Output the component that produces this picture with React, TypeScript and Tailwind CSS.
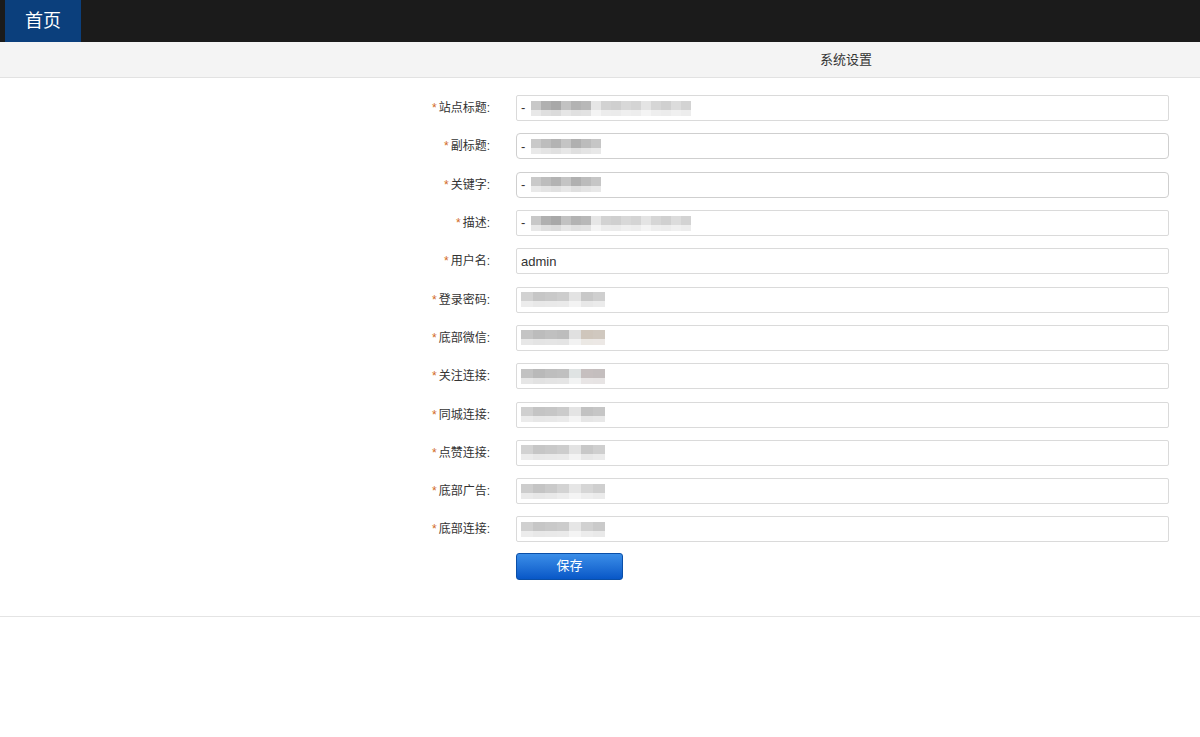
import React from "react";

type Row = {
  label: string;
  dash?: boolean;
  value?: string;
  blur?: string[];
  wide?: boolean;
  rounded?: boolean;
};

const shortBlur = ["#c9c9c9", "#bdbdbd", "#b3b3b3", "#c4c4c4", "#b0b0b0", "#bcbcbc", "#c6c6c6"];
const longBlur = [
  "#c8c8c8", "#b0b0b0", "#a8a8a8", "#c2c2c2", "#b3b3b3", "#b8b8b8", "#e6e6e6", "#d2d2d2",
  "#cfcfcf", "#d8d8d8", "#d4d4d4", "#e4e4e4", "#d6d6d6", "#d0d0d0", "#dcdcdc", "#d3d3d3",
];
const linkBlur = ["#d2d2d2", "#c6c6c6", "#c9c9c9", "#cdcdcd", "#e3e3e3", "#c8c8c8", "#cfcfcf"];

const rows: Row[] = [
  { label: "站点标题", dash: true, blur: longBlur },
  { label: "副标题", dash: true, blur: shortBlur, rounded: true },
  { label: "关键字", dash: true, blur: shortBlur, rounded: true },
  { label: "描述", dash: true, blur: longBlur },
  { label: "用户名", value: "admin" },
  { label: "登录密码", blur: linkBlur, wide: true },
  { label: "底部微信", wide: true, blur: ["#c4c4c4", "#bcbcbc", "#c0c0c0", "#bdbdbd", "#e0e0e0", "#cfc6bc", "#d0c8bf"] },
  { label: "关注连接", wide: true, blur: ["#c2c2c2", "#b9b9b9", "#bebebe", "#c0c0c0", "#dfe3e3", "#c6bfbf", "#c4bebe"] },
  { label: "同城连接", wide: true, blur: ["#cfcfcf", "#c4c4c4", "#c6c6c6", "#cbcbcb", "#e4e4e4", "#c2c2c2", "#c6c6c6"] },
  { label: "点赞连接", blur: linkBlur, wide: true },
  { label: "底部广告", wide: true, blur: ["#cdcdcd", "#c4c4c4", "#cacaca", "#d3d3d3", "#e6e6e6", "#d6d6d6", "#cfcfcf"] },
  { label: "底部连接", wide: true, blur: ["#d0d0d0", "#c6c6c6", "#c9c9c9", "#cccccc", "#e6e6e6", "#d1d1d1", "#cacaca"] },
];

const Blur = ({ shades, wide }: { shades: string[]; wide?: boolean }) => (
  <div className="flex flex-col">
    <div className="flex">
      {shades.map((c, i) => (
        <span
          key={i}
          className={wide ? "w-[12px] h-[9px]" : "w-[10px] h-[9px]"}
          style={{ backgroundColor: c }}
        />
      ))}
    </div>
    <div className="flex opacity-40">
      {shades.map((c, i) => (
        <span
          key={i}
          className={wide ? "w-[12px] h-[6px]" : "w-[10px] h-[6px]"}
          style={{ backgroundColor: c }}
        />
      ))}
    </div>
  </div>
);

export default function App() {
  return (
    <div
      className="min-h-screen bg-white text-[#333]"
      style={{ fontFamily: '"Liberation Sans", "Noto Sans CJK SC", sans-serif' }}
    >
      {/* Top bar */}
      <div className="h-[42px] bg-[#1b1b1b] flex">
        <div className="ml-[5px] w-[76px] bg-[#0b3f7c] text-white text-[18px] flex items-center justify-center">
          首页
        </div>
      </div>

      {/* Title bar */}
      <div className="h-[36px] bg-[#f4f4f4] border-b border-[#e2e2e2] grid grid-cols-[492px_1fr] items-center">
        <div />
        <div className="text-center text-[13px] text-[#333]">系统设置</div>
      </div>

      {/* Form */}
      <div className="pt-[11px] pb-[36px] border-b border-[#e4e4e4]">
        {rows.map((r) => (
          <div key={r.label} className="h-[38.3px] grid grid-cols-[492px_1fr] items-center">
            <div className="text-right text-[12px] text-[#333] pr-[2px]">
              <span className="text-[#d2691e] mr-[2px]">*</span>
              {r.label}:
            </div>
            <div className="pl-[24px] pr-[31px]">
              <div
                className={`h-[26px] border bg-white flex items-center pl-[4px] text-[13px] ${
                  r.rounded ? "rounded-[4px] border-[#cfcfcf]" : "rounded-[2px] border-[#dadada]"
                }`}
              >
                {r.value && <span className="text-[#333]">{r.value}</span>}
                {r.dash && <span className="text-[#333] mr-[6px]">-</span>}
                {r.blur && <Blur shades={r.blur} wide={r.wide} />}
              </div>
            </div>
          </div>
        ))}

        <div className="grid grid-cols-[492px_1fr] mt-[4px]">
          <div />
          <div className="pl-[24px]">
            <button className="w-[107px] h-[27px] rounded-[3px] border border-[#0a4fa8] bg-gradient-to-b from-[#3b8ee8] to-[#0757c7] text-white text-[13px]">
              保存
            </button>
          </div>
        </div>
      </div>
    </div>
  );
}
